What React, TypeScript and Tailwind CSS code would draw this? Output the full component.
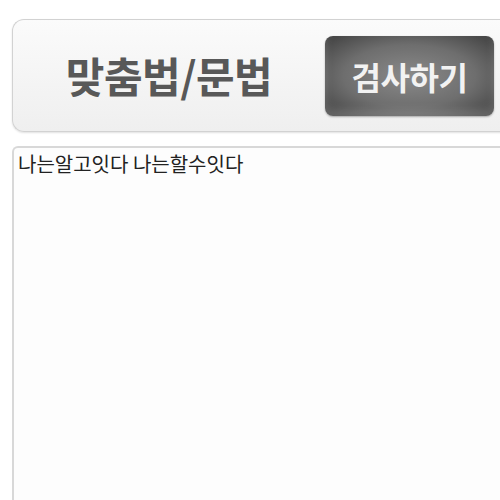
import React from 'react';

const font = { fontFamily: '"Noto Sans CJK KR", "Noto Sans", sans-serif' };

export default function App() {
  return (
    <div className="w-[500px] h-[500px] overflow-hidden bg-white" style={font}>
      <div className="pt-[19px] pl-[12px]">
        <div className="w-[520px] h-[113px] rounded-l-[12px] border border-r-0 border-[#d2d2d2] bg-gradient-to-b from-[#fbfbfb] to-[#efefef] shadow-[0_1px_2px_rgba(0,0,0,0.12)] flex items-center">
          <div className="w-[312px] text-center text-[42px] font-semibold text-[#585858] tracking-[-0.5px] leading-none pb-[2px]">
            맞춤법/문법
          </div>
          <button className="w-[169px] h-[80px] rounded-[8px] bg-[radial-gradient(ellipse_at_center,#8a8a8a_0%,#6e6e6e_55%,#3f3f3f_100%)] shadow-[inset_0_-6px_8px_rgba(255,255,255,0.18),0_1px_2px_rgba(0,0,0,0.3)] flex items-center justify-center text-[32px] font-semibold text-[#f2f2f2] tracking-[-0.5px] leading-none">
            검사하기
          </button>
        </div>
        <div className="mt-[14px] w-[520px] h-[400px] rounded-tl-[6px] border-l-2 border-t-2 border-[#d8d8d8] bg-[#fdfdfd] px-[4px] pt-[3px] text-[20px] text-[#222] leading-[26px]">
          나는알고잇다 나는할수잇다
        </div>
      </div>
    </div>
  );
}
